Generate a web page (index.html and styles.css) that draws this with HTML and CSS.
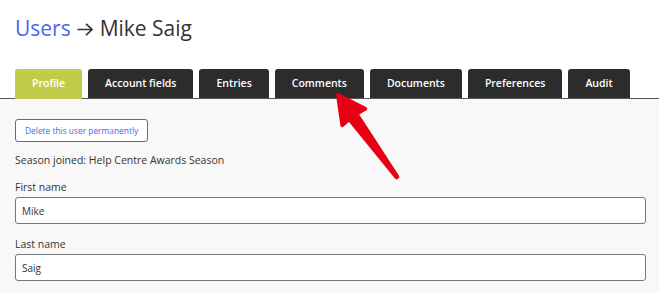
FILE: index.html
```html
<!DOCTYPE html>
<html lang="en">

<head>
    <meta charset="UTF-8">
    <meta name="viewport" content="width=device-width, initial-scale=1.0">
    <title>Users - Mike Saig</title>
    <link rel="stylesheet" href="styles.css">
</head>

<body>
    <div class="header">
        <h1 class="title">
            <a class="crumb" href="#">Users</a>
            <svg class="sep" width="16" height="13" viewBox="0 0 16 13">
                <path d="M0.5 6.5 H15 M9 0.8 L15 6.5 L9 12.2" fill="none" stroke="#333" stroke-width="1.6" />
            </svg>
            Mike Saig
        </h1>
        <ul class="tabs">
            <li class="tab active">Profile</li>
            <li class="tab">Account fields</li>
            <li class="tab">Entries</li>
            <li class="tab">Comments</li>
            <li class="tab">Documents</li>
            <li class="tab">Preferences</li>
            <li class="tab">Audit</li>
        </ul>
    </div>

    <div class="panel">
        <button class="delete">Delete this user permanently</button>
        <p class="season">Season joined: Help Centre Awards Season</p>

        <label class="field-label" for="first">First name</label>
        <input id="first" class="field" type="text" value="Mike">

        <label class="field-label" for="last">Last name</label>
        <input id="last" class="field" type="text" value="Saig">
    </div>

    <!-- annotation arrow -->
    <svg class="pointer" width="659" height="293" viewBox="0 0 659 293">
        <g transform="translate(338 95) rotate(54.3)">
            <path d="M0 0 L27 -14 L26 -4 L101 -0.5 L101 0.5 L26 5 L27 14 Z" fill="#e60012" stroke="#e60012"
                stroke-width="4" stroke-linejoin="round" />
        </g>
    </svg>
</body>

</html>
```

FILE: styles.css
```css
* {
    box-sizing: border-box;
}

body {
    margin: 0;
    background-color: #f8f8f8;
    font-family: 'Open Sans', 'Noto Sans', sans-serif;
    color: #333;
}

.header {
    background-color: #fff;
    padding: 0 0 0 15px;
    border-bottom: 1px solid #555;
}

.title {
    margin: 0;
    padding-top: 13px;
    height: 69px;
    font-size: 21px;
    line-height: 30px;
    font-weight: 400;
    color: #333;
}

.crumb {
    color: #4767ee;
    text-decoration: none;
}

.sep {
    vertical-align: 0;
    margin: 0 1px;
}

.tabs {
    display: flex;
    gap: 6px;
    margin: 0;
    padding: 0;
    list-style: none;
}

.tab {
    height: 29px;
    line-height: 29px;
    padding: 0 17px;
    background-color: #2c2c2c;
    color: #fff;
    font-size: 10.5px;
    font-weight: 600;
    white-space: nowrap;
    border-radius: 3px 3px 0 0;
    margin-bottom: -1px;
}

.tab.active {
    background-color: #c3cc4a;
    height: 30px;
}

.panel {
    padding: 20px 13px 0 15px;
}

.delete {
    display: block;
    height: 23px;
    padding: 0 9px;
    background-color: #fff;
    border: 1px solid #4767ee;
    border-radius: 3px;
    color: #4767ee;
    font-family: inherit;
    font-size: 8.4px;
}

.season {
    margin: 10px 0 0;
    font-size: 10.5px;
    line-height: 16px;
}

.field-label {
    display: block;
    margin-top: 11px;
    font-size: 10.5px;
    line-height: 16px;
}

.field-label + .field ~ .field-label {
    margin-top: 12px;
}

.field {
    display: block;
    width: 100%;
    height: 27px;
    margin-top: 2px;
    padding: 0 6px;
    border: 1px solid #777;
    border-radius: 3px;
    background-color: #fff;
    font-family: inherit;
    font-size: 10px;
    color: #333;
}

.pointer {
    position: absolute;
    top: 0;
    left: 0;
    pointer-events: none;
}
```
